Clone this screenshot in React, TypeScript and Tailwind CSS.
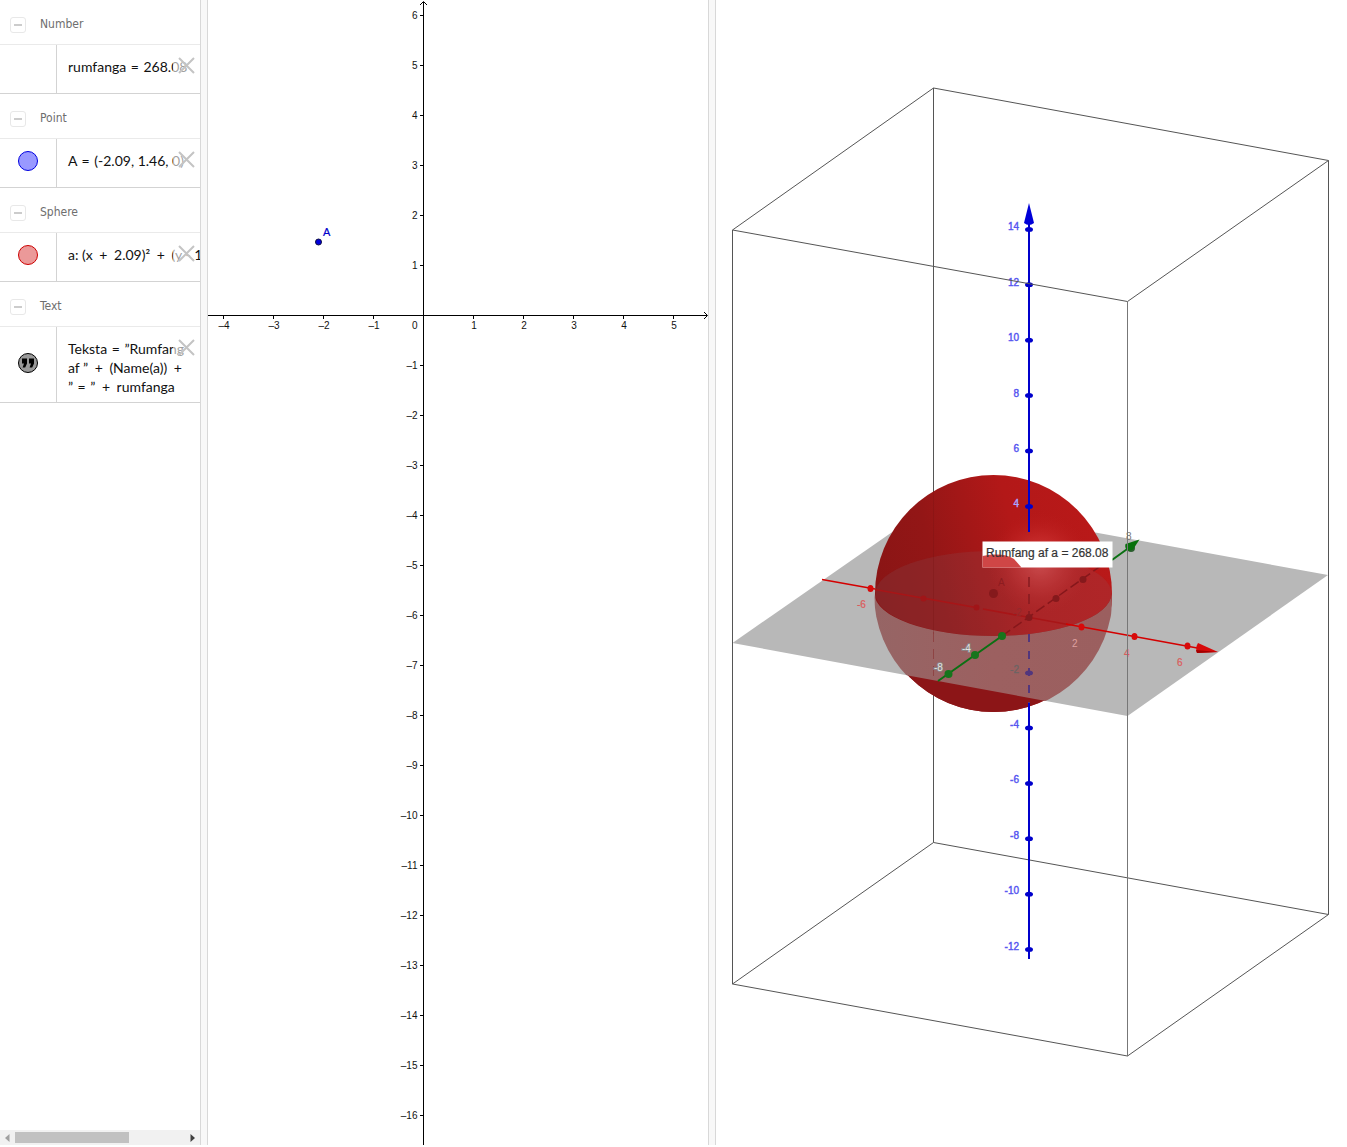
import React from "react";

const SANS = "'Liberation Sans', Arial, sans-serif";

type Row = {
  title: string;
  lines: string[];
  marker?: "blue" | "red" | "text";
};

const rows: Row[] = [
  { title: "Number", lines: ["rumfanga = 268.08"] },
  { title: "Point", lines: ["A = (-2.09, 1.46, 0)"], marker: "blue" },
  { title: "Sphere", lines: ["a: (x + 2.09)² + (y - 1"], marker: "red" },
  { title: "Text", lines: ["Teksta = ”Rumfang", "af ” + (Name(a)) +", "” = ” + rumfanga"], marker: "text" },
];

function Marker({ kind }: { kind?: Row["marker"] }) {
  if (!kind) return null;
  if (kind === "text") {
    return (
      <button aria-label="Toggle text" className="flex size-5 items-center justify-center rounded-full border border-black bg-[#999999]">
        <svg width="14" height="10" viewBox="0 0 14 10">
          <path d="M1 0.5h5v5L4.2 9.5H1.6L3 5.5H1zM8 0.5h5v5L11.200 9.500H8.600L10 5.500H8z" fill="#000" />
        </svg>
      </button>
    );
  }
  return kind === "blue" ? (
    <button aria-label="Toggle point A" className="size-5 rounded-full border border-[#0000e0] bg-[#9999ff]" />
  ) : (
    <button aria-label="Toggle sphere a" className="size-5 rounded-full border border-[#cc0000] bg-[#eb9999]" />
  );
}

/* Binary operators get a little room on both sides, as in typeset formulas. */
function Formula({ text }: { text: string }) {
  return (
    <p className="flex whitespace-pre">
      {text.split(/([=+])/).map((part, i) => {
        if (part === "=") return <span key={i} className="mx-px">{part}</span>;
        if (part === "+") return <span key={i} className="mx-[3px]">{part}</span>;
        return part ? <span key={i}>{part}</span> : null;
      })}
    </p>
  );
}

function AlgebraRow({ row }: { row: Row }) {
  const tall = row.lines.length > 1;
  return (
    <section>
      <div className="flex h-[45px] items-center gap-[14px] border-b border-[#eaeaea] pl-[10px]">
        <button aria-label={"Collapse " + row.title} className="mt-[5px] flex size-4 items-center justify-center rounded-[3px] border border-[#e8e8e8]">
          <span className="h-0.5 w-2 bg-[#cccccc]" />
        </button>
        <h2 className="pt-[3px] font-['DejaVu_Sans_Condensed','DejaVu_Sans',sans-serif] text-[12px] leading-4 text-[#6e6e6e]">{row.title}</h2>
      </div>
      <div className="flex border-b border-[#d3d3d3]">
        <div className={tall ? "flex w-[57px] shrink-0 justify-center border-r border-[#d3d3d3] pt-[26px]" : "flex w-[57px] shrink-0 justify-center border-r border-[#d3d3d3] pt-3"}>
          <Marker kind={row.marker} />
        </div>
        <div className="relative min-w-0 flex-1 pt-3 pb-1.5 pl-[11px]">
          <div className="min-h-[30px] font-['Lato',sans-serif] text-[14px] leading-[19px] text-[#111]">
            {row.lines.map((line) => (
              <Formula key={line} text={line} />
            ))}
          </div>
          <button aria-label="Delete" className="absolute top-3 right-[5px] flex h-5 w-[22px] justify-end bg-white/60">
            <svg width="18" height="18" viewBox="0 0 18 18">
              <path d="M2 1L17 16M17 1L2 16" stroke="#c4c4c4" strokeWidth="2" fill="none" />
            </svg>
          </button>
        </div>
      </div>
    </section>
  );
}

const xTicks = [-4, -3, -2, -1, 1, 2, 3, 4, 5];
const yTicks = [6, 5, 4, 3, 2, 1, -1, -2, -3, -4, -5, -6, -7, -8, -9, -10, -11, -12, -13, -14, -15, -16];
const label = (n: number) => (n < 0 ? "–" + -n : String(n));

function Graphics2D() {
  return (
    <svg className="block h-full w-full" fontFamily={SANS} fontSize="10" fill="#111">
      <g stroke="#000" strokeWidth="1" fill="none" shapeRendering="crispEdges">
        <path d="M0 315.5H499M215.500 2V1200" />
        {xTicks.map((n) => (
          <path key={n} d={`M${215.5 + n * 50} 316v3`} />
        ))}
        {yTicks.map((n) => (
          <path key={n} d={`M212 ${315.5 - n * 50}h3`} />
        ))}
      </g>
      <path d="M496 312L499.500 315.500L496 319M212 5L215.500 1.500L219 5" stroke="#000" fill="none" />
      {xTicks.map((n) => (
        <text key={n} x={216 + n * 50} y="329" textAnchor="middle">{label(n)}</text>
      ))}
      {yTicks.map((n) => (
        <text key={n} x="209.500" y={319 - n * 50} textAnchor="end">{label(n)}</text>
      ))}
      <text x="209.500" y="329" textAnchor="end">0</text>
      <circle cx="110.500" cy="242" r="3" fill="#0000dd" stroke="#101040" />
      <text x="115" y="236" fontSize="11" fill="#0000cc" stroke="#0000cc" strokeWidth="0.200">A</text>
    </svg>
  );
}

const zTicks = [14, 12, 10, 8, 6, 4, -4, -6, -8, -10, -12];
const zy = (n: number) => 617.2 - n * 27.7;

function Graphics3D() {
  return (
    <svg className="block h-full w-full" viewBox="716 0 631 1145" preserveAspectRatio="xMinYMin meet" fontFamily={SANS} fontSize="10">
      <defs>
        <linearGradient id="shade" x1="0" y1="0.450" x2="1" y2="0.200">
          <stop offset="0" stopColor="#8a1515" />
          <stop offset="0.250" stopColor="#931616" />
          <stop offset="0.600" stopColor="#b31818" />
          <stop offset="1" stopColor="#ba1919" />
        </linearGradient>
        <radialGradient id="shine" gradientUnits="userSpaceOnUse" cx="1040" cy="563" r="52">
          <stop offset="0" stopColor="#dd4c4c" stopOpacity="0.900" />
          <stop offset="0.500" stopColor="#cc3030" stopOpacity="0.550" />
          <stop offset="1" stopColor="#b81919" stopOpacity="0" />
        </radialGradient>
        <linearGradient id="below" x1="0" y1="0" x2="1" y2="0">
          <stop offset="0" stopColor="#966565" />
          <stop offset="0.500" stopColor="#9c6060" />
          <stop offset="1" stopColor="#9b5f5f" />
        </linearGradient>
        <clipPath id="plane"><path d="M934 503L1328 575L1127.500 716L732.500 643z" /></clipPath>
        <clipPath id="under"><path d="M874.500 593.500A118.500 42.500 0 0 0 1111.500 593.500V720H874.500z" /></clipPath>
      </defs>
      <g stroke="#555" strokeWidth="1" fill="none">
        <path d="M933.500 88V842.500M933.500 842.500L1328.500 914.500M933.500 842.500L732.500 984" />
      </g>
      <path d="M934 503L1328 575L1127.500 716L732.500 643z" fill="#b8b8b8" />
      <circle cx="993.500" cy="593.500" r="118.500" fill="url(#shade)" />
      <circle cx="993.500" cy="593.500" r="118.500" fill="url(#shine)" />
      <ellipse cx="993.500" cy="593.500" rx="118" ry="42.500" fill="#787888" opacity="0.140" />
      <g clipPath="url(#under)">
        <circle cx="993.500" cy="593.500" r="118.500" fill="#8c1517" />
        <g clipPath="url(#plane)">
          <circle cx="993.500" cy="593.500" r="119.500" fill="url(#below)" />
        </g>
      </g>
      <path d="M933.500 491V634" stroke="#701010" opacity="0.250" />
      <path d="M933.500 632V680" stroke="#8a3838" strokeDasharray="10 7" opacity="0.700" />

      <g stroke="#a81517" strokeWidth="1.500" fill="none">
        <path d="M875 589.500L976 607.500M983 609L1068 624.500" />
        <path d="M1002 636L1112 558" stroke="#86171b" strokeDasharray="10 4" />
      </g>
      <g fill="#a01518">
        <circle cx="923.500" cy="598.500" r="3" />
        <circle cx="976.500" cy="607.500" r="3" />
      </g>
      <g fill="#85191c">
        <circle cx="993.500" cy="593.500" r="4.500" />
        <circle cx="1029" cy="617.500" r="3.500" />
        <circle cx="1056" cy="598.500" r="3.500" />
        <circle cx="1083" cy="579.500" r="3.500" />
      </g>
      <text x="998" y="586" fill="#8d1c20">A</text>
      <text x="1013" y="616" fill="#94292b">-2</text>

      <g stroke="#d40000" strokeWidth="1.600">
        <path d="M822 579.500L875 589M1066 624L1200 648.500" />
      </g>
      <g fill="#d80a0a">
        <ellipse cx="870.500" cy="588.500" rx="3" ry="3.500" />
        <ellipse cx="1081.500" cy="627" rx="3" ry="3.500" />
        <ellipse cx="1134.500" cy="636.500" rx="3" ry="3.500" />
        <ellipse cx="1187.500" cy="646" rx="3" ry="3.500" />
        <path d="M1198 643L1218 652L1197 653Q1195 648 1198 643z" />
      </g>
      <path d="M1196 650L1218 652L1197 653z" fill="#a30000" />
      <g fill="#dc5b5b" stroke="#dc5b5b" strokeWidth="0.200">
        <text x="857" y="608">-6</text>
        <text x="1072" y="647" fill="#dfa0a0" stroke="none">2</text>
        <text x="1124" y="657">4</text>
        <text x="1177" y="666">6</text>
      </g>

      <path d="M938 681L1002 636M1112 560L1130 547" stroke="#0b7013" strokeWidth="2" />
      <g fill="#16751c">
        <circle cx="948.500" cy="674" r="4" />
        <circle cx="975" cy="655" r="4" />
        <circle cx="1002" cy="636" r="4" />
        <circle cx="1131" cy="548" r="4" fill="#2d5e30" />
        <path d="M1139.500 539.500L1125.500 544Q1124 549 1129 551L1133 549.500z" fill="#08700c" />
      </g>
      <g fill="#e2e2e2" stroke="#8a8080" strokeWidth="2" paintOrder="stroke">
        <text x="934" y="671">-8</text>
        <text x="962" y="652">-4</text>
      </g>
      <text x="1126" y="540" fill="#777">8</text>

      <g stroke="#0000cc" strokeWidth="2">
        <path d="M1029 222V532M1029 703V959" />
        <path d="M1029 633V703" stroke="#52367d" strokeDasharray="8 9" strokeDashoffset="-1" />
        <path d="M1029 577V616" stroke="#851b20" strokeDasharray="10 7" strokeWidth="1.500" />
      </g>
      <path d="M1029 203L1034 223Q1029 227 1024 223z" fill="#0000d8" />
      <g fill="#0000cc">
        {zTicks.map((n) => (
          <g key={n}>
            <ellipse cx="1029" cy={zy(n)} rx="4" ry="2.500" />
            <text x="1019" y={zy(n) + (n > 0 ? 1 : 0)} textAnchor="end" fill={n === 4 ? "#a8a8ff" : "#5555f0"} stroke={n === 4 ? "#a8a8ff" : "#5555f0"} strokeWidth="0.400">{n}</text>
          </g>
        ))}
        <ellipse cx="1029" cy="673" rx="4" ry="2.500" fill="#52367d" />
        <text x="1019" y="673" textAnchor="end" fill="#6c6464" stroke="#6c6464" strokeWidth="0.300">-2</text>
      </g>

      <rect x="982.500" y="541.500" width="130" height="26" fill="#fff" />
      <path d="M982.500 556Q1003 552 1014 559L1021.500 567.500H982.500z" fill="#cf4646" />
      <text x="986" y="557" fontSize="12" fill="#333" stroke="#333" strokeWidth="0.200">Rumfang af a = 268.08</text>

      <path d="M933.500 88L1328.500 160.500L1127.500 301.500L732.500 230zM732.500 230V984L1127.500 1056L1328.500 914.500V160.500" fill="none" stroke="#555" />
      <path d="M1127.500 301.500V1056" stroke="#777" />
    </svg>
  );
}

export default function App() {
  return (
    <main className="flex h-screen overflow-hidden bg-white pb-0.5">
      <aside className="flex w-[200px] shrink-0 flex-col">
        <div className="min-h-0 flex-1 overflow-hidden">
          {rows.map((row) => (
            <AlgebraRow key={row.title} row={row} />
          ))}
        </div>
        <div className="flex h-[15px] shrink-0 items-center justify-between bg-[#f1f1f1] px-[5px]">
          <svg width="5" height="8" viewBox="0 0 5 8"><path d="M4.500 0V8L0 4z" fill="#a0a0a0" /></svg>
          <div className="mr-auto ml-[5px] h-[11px] w-3/5 bg-[#c1c1c1]" />
          <svg width="5" height="8" viewBox="0 0 5 8"><path d="M0.500 0V8L5 4z" fill="#404040" /></svg>
        </div>
      </aside>
      <div className="w-2 shrink-0 border-x border-[#d8d8d8] bg-[#f8f8f8]" />
      <section aria-label="Graphics" className="w-[500px] shrink-0">
        <Graphics2D />
      </section>
      <div className="w-2 shrink-0 border-x border-[#d8d8d8] bg-[#f8f8f8]" />
      <section aria-label="3D Graphics" className="min-w-0 flex-1">
        <Graphics3D />
      </section>
    </main>
  );
}
